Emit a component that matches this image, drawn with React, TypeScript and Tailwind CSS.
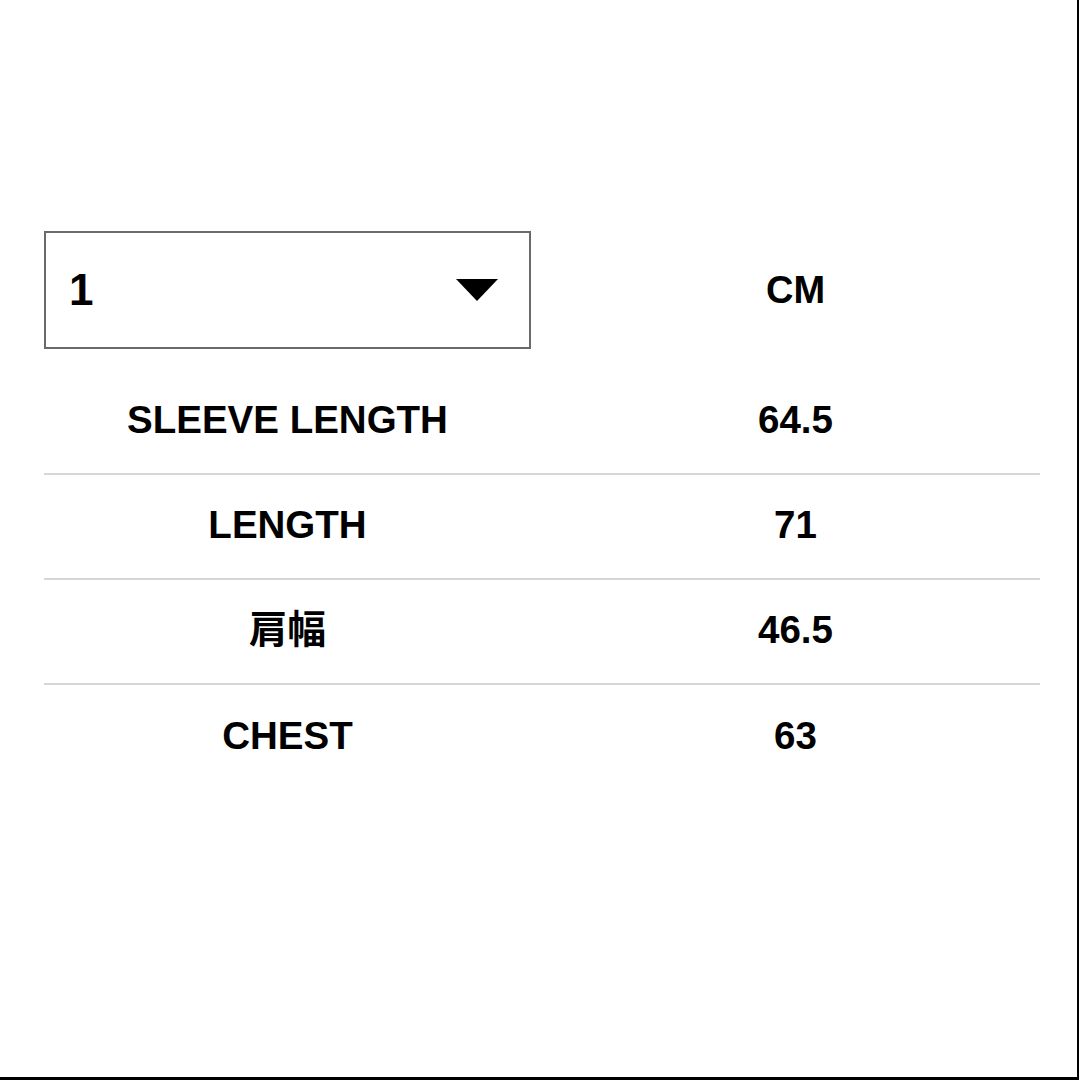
import React, { useState } from "react";

const rows = [
  { label: "SLEEVE LENGTH", value: "64.5" },
  { label: "LENGTH", value: "71" },
  { label: "肩幅", value: "46.5" },
  { label: "CHEST", value: "63" },
];

const App = () => {
  const [size] = useState("1");

  return (
    <div
      className="w-[1079px] h-[1080px] bg-white border-r-2 border-b-[3px] border-black text-black overflow-hidden"
      style={{ fontFamily: '"Liberation Sans", Arial, "Noto Sans CJK JP", sans-serif' }}
    >
      <div className="pt-[231px] pl-[44px] w-[1040px]">
        {/* Size selector + unit */}
        <div className="grid grid-cols-[487px_1fr] gap-[20px] items-center">
          <div className="h-[118px] border-2 border-[#6a6a6a] flex items-center justify-between pl-[23px] pr-[31px]">
            <span className="text-[44px] font-bold leading-none">{size}</span>
            <svg width="42" height="22" viewBox="0 0 42 22">
              <path d="M0 0 H42 L21 22 Z" fill="#000" />
            </svg>
          </div>
          <div className="text-center text-[38px] font-bold leading-none">CM</div>
        </div>

        {/* Measurements */}
        <div className="mt-[21px]">
          {rows.map((r, i) => (
            <div
              key={r.label}
              className={
                "grid grid-cols-[487px_1fr] gap-[20px] items-center h-[105px] pt-[2px] " +
                (i < rows.length - 1 ? "border-b-2 border-[#d6d6d6]" : "")
              }
            >
              <div className="text-center text-[38.5px] font-bold leading-none -mt-[4px]">{r.label}</div>
              <div className="text-center text-[38.5px] font-bold leading-none -mt-[4px]">{r.value}</div>
            </div>
          ))}
        </div>
      </div>
    </div>
  );
};

export default App;
